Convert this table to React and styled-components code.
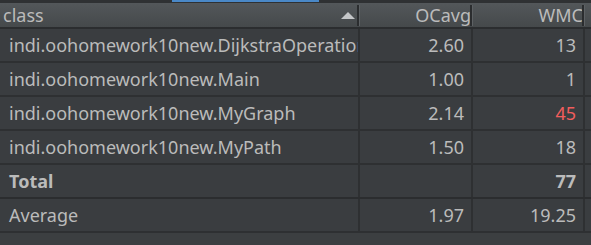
import React from "react"
import styled, { createGlobalStyle } from "styled-components"

const GlobalStyle = createGlobalStyle`
  html, body {
    margin: 0;
    padding: 0;
    background: #3c3f41;
  }
  body {
    font-family: "Noto Sans", "Open Sans", sans-serif;
    color: #bbbbbb;
  }
`

const rows = [
  { name: "indi.oohomework10new.DijkstraOperation", ocavg: "2.60", wmc: "13" },
  { name: "indi.oohomework10new.Main", ocavg: "1.00", wmc: "1" },
  { name: "indi.oohomework10new.MyGraph", ocavg: "2.14", wmc: "45", hot: true },
  { name: "indi.oohomework10new.MyPath", ocavg: "1.50", wmc: "18" }
]

export default function App() {
  return (
    <>
      <GlobalStyle />
      <Page>
        <TopStrip>
          <ActiveTab />
        </TopStrip>
        <Table>
          <HeaderRow>
            <HeadCell $width={358} $align="left">
              class
              <SortArrow />
            </HeadCell>
            <HeadCell $width={111}>OCavg</HeadCell>
            <HeadCell $width={110}>WMC</HeadCell>
          </HeaderRow>
          {rows.map((r) => (
            <Row key={r.name}>
              <NameCell>{r.name}</NameCell>
              <NumCell $width={111}>{r.ocavg}</NumCell>
              <NumCell $width={110} $hot={r.hot}>{r.wmc}</NumCell>
            </Row>
          ))}
          <Row $thick>
            <NameCell $bold>Total</NameCell>
            <NumCell $width={111}></NumCell>
            <NumCell $width={110} $bold>77</NumCell>
          </Row>
          <Row>
            <NameCell>Average</NameCell>
            <NumCell $width={111}>1.97</NumCell>
            <NumCell $width={110}>19.25</NumCell>
          </Row>
        </Table>
      </Page>
    </>
  )
}

const Page = styled.div`
  width: 591px;
  height: 245px;
  overflow: hidden;
  background: #3c3f41;
`
const TopStrip = styled.div`
  height: 3px;
  background: #2f3133;
  position: relative;
`
const ActiveTab = styled.div`
  position: absolute;
  left: 172px;
  width: 147px;
  top: 0;
  height: 2px;
  background: #4a88c7;
`
const Table = styled.div`
  width: 591px;
  display: flex;
  flex-direction: column;
`
const HeaderRow = styled.div`
  display: flex;
  height: 24px;
  background: linear-gradient(#53575a, #45494b);
  border-bottom: 2px solid #2b2d2f;
`
const HeadCell = styled.div`
  position: relative;
  box-sizing: border-box;
  width: ${(p) => p.$width + 2}px;
  flex: none;
  display: flex;
  align-items: center;
  justify-content: ${(p) => (p.$align === "left" ? "flex-start" : "flex-end")};
  padding-left: ${(p) => (p.$align === "left" ? "3px" : "0")};
  padding-right: ${(p) => (p.$align === "left" ? "0" : "2px")};
  font-size: 18px;
  color: #bbbbbb;
  &::after {
    content: "";
    position: absolute;
    right: 0;
    top: 2px;
    bottom: 1px;
    width: 2px;
    background: #2b2d2f;
    border-right: 1px solid #5d6164;
  }
`
const SortArrow = styled.span`
  position: absolute;
  right: 5px;
  top: 9px;
  width: 0;
  height: 0;
  border-left: 7px solid transparent;
  border-right: 7px solid transparent;
  border-bottom: 7px solid #c4c6c8;
`
const Row = styled.div`
  display: flex;
  height: 32px;
  background: #3a3d40;
  border-bottom: 2px solid ${(p) => (p.$thick ? "#2b2d2f" : "#2e3032")};
`
const NameCell = styled.div`
  box-sizing: border-box;
  width: 360px;
  flex: none;
  display: flex;
  align-items: center;
  padding-left: 9px;
  overflow: hidden;
  white-space: nowrap;
  border-right: 2px solid #2e3032;
  font-size: 18px;
  font-weight: ${(p) => (p.$bold ? 700 : 400)};
`
const NumCell = styled.div`
  box-sizing: border-box;
  width: ${(p) => p.$width + 2}px;
  flex: none;
  display: flex;
  align-items: center;
  justify-content: flex-end;
  padding-right: 7px;
  border-right: 2px solid #2e3032;
  font-size: 18px;
  font-weight: ${(p) => (p.$bold ? 700 : 400)};
  color: ${(p) => (p.$hot ? "#f25d5d" : "#bbbbbb")};
`
